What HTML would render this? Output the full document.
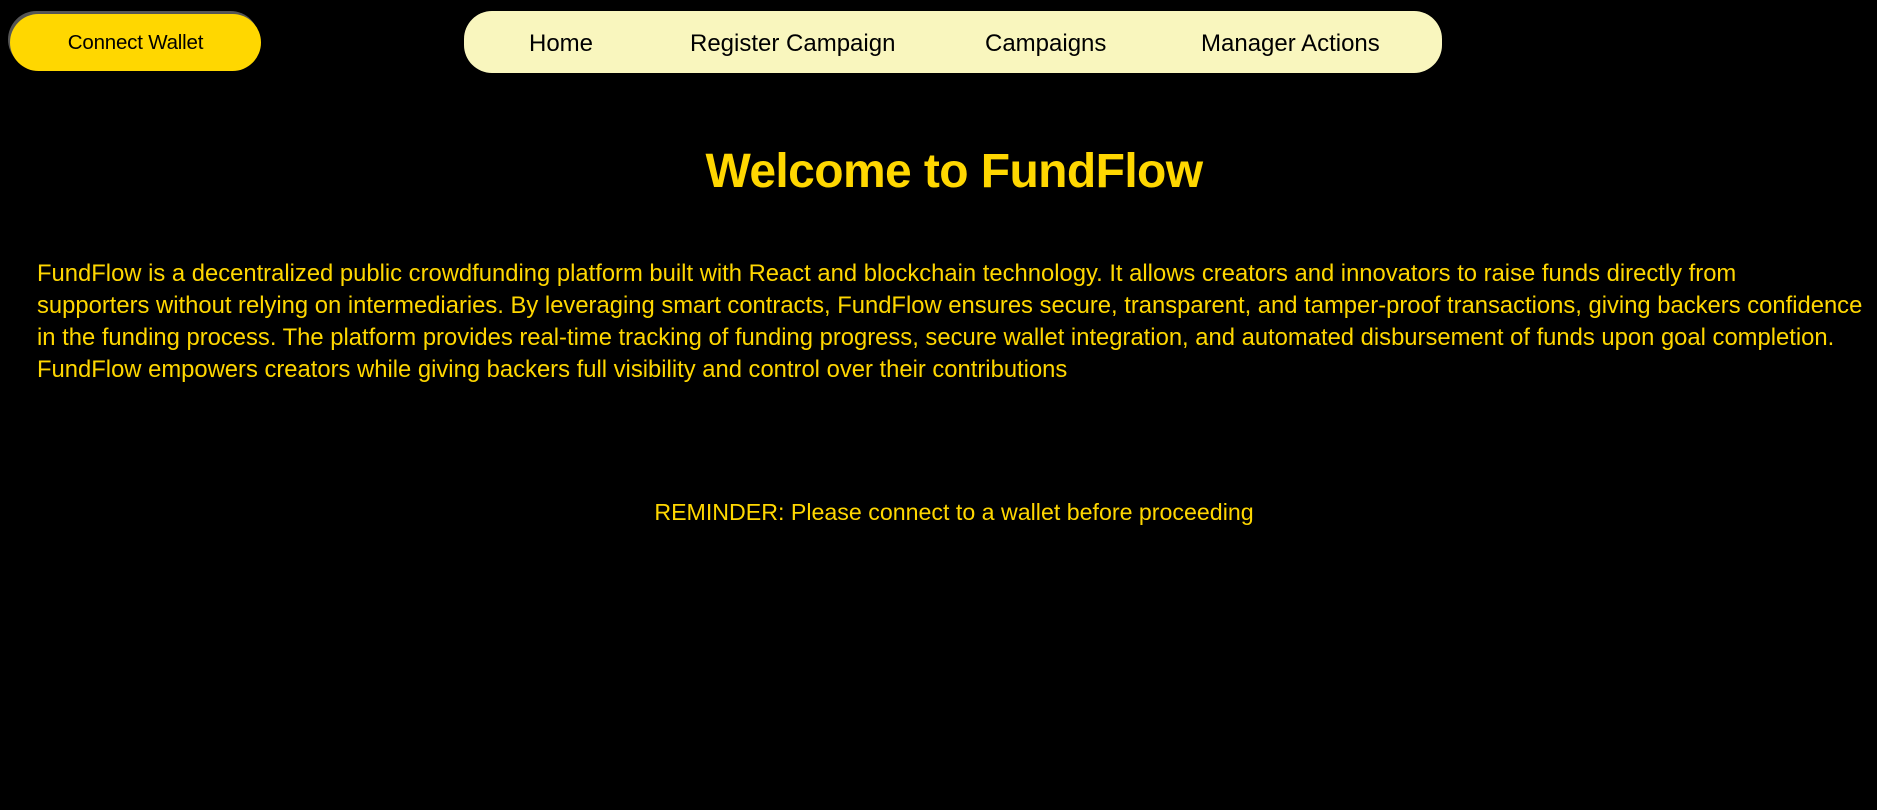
<!DOCTYPE html>
<html><head><meta charset="utf-8"><style>
body{margin:0;background:#000;width:1877px;height:810px;overflow:hidden;font-family:"Liberation Sans",sans-serif;position:relative}
.btn{position:absolute;left:10px;top:14px;width:251px;height:57px;background:#FFD700;border-radius:29px;box-shadow:-2px -3px 0 #555;display:flex;align-items:center;justify-content:center;font-size:20.5px;color:#000;letter-spacing:-0.2px}
.nav{position:absolute;left:464px;top:11px;width:978px;height:62px;background:#F9F6BE;border-radius:28px}
.nav span{position:absolute;top:19px;font-size:24px;color:#000;white-space:nowrap}
h1{position:absolute;margin:0;left:0;width:1908px;text-align:center;top:144px;font-size:48px;color:#FFD700;font-weight:bold;letter-spacing:-0.6px}
.p{position:absolute;left:37px;top:258px;font-size:23.8px;line-height:32px;color:#FFD700;white-space:nowrap}
.r{position:absolute;left:0;width:1908px;text-align:center;top:499px;font-size:23.2px;color:#FFD700}
</style></head><body>
<div class="btn">Connect Wallet</div>
<div class="nav">
<span style="left:65px">Home</span>
<span style="left:226px">Register Campaign</span>
<span style="left:521px">Campaigns</span>
<span style="left:737px">Manager Actions</span>
</div>
<h1>Welcome to FundFlow</h1>
<div class="p">FundFlow is a decentralized public crowdfunding platform built with React and blockchain technology. It allows creators and innovators to raise funds directly from<br>supporters without relying on intermediaries. By leveraging smart contracts, FundFlow ensures secure, transparent, and tamper-proof transactions, giving backers confidence<br>in the funding process. The platform provides real-time tracking of funding progress, secure wallet integration, and automated disbursement of funds upon goal completion.<br>FundFlow empowers creators while giving backers full visibility and control over their contributions</div>
<div class="r">REMINDER: Please connect to a wallet before proceeding</div>
</body></html>
